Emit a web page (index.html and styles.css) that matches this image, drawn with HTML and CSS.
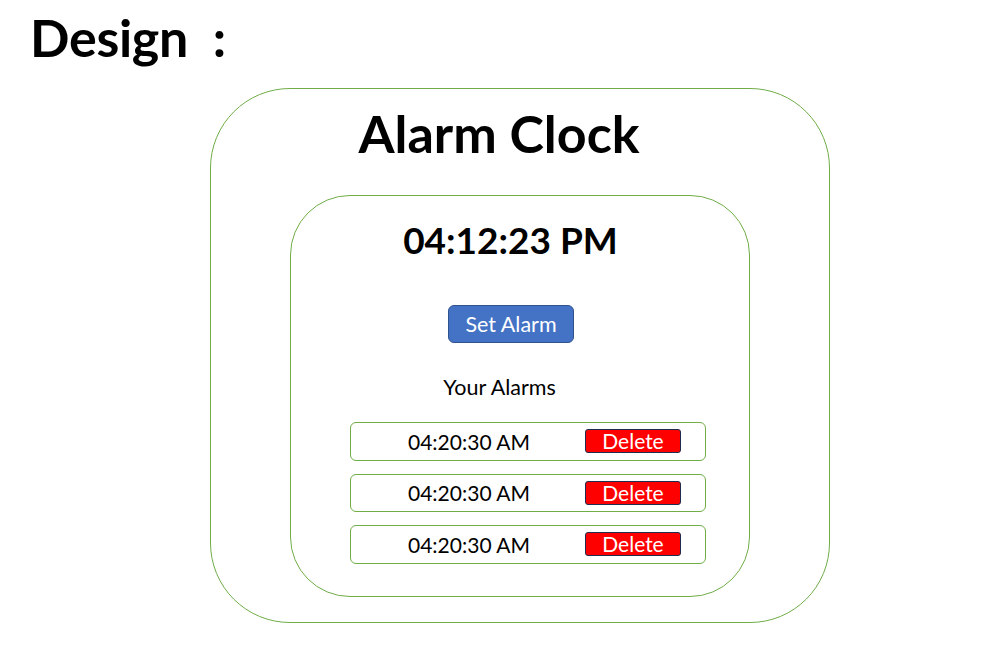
FILE: index.html
```html
<!DOCTYPE html>
<html lang="en">
<head>
<meta charset="utf-8">
<title>Alarm Clock Design</title>
<link rel="stylesheet" href="styles.css">
</head>
<body>
<h1 class="page-title">Design  :</h1>
<main class="clock-card">
  <h2 class="clock-title">Alarm Clock</h2>
  <section class="clock-panel">
    <div class="current-time">04:12:23 PM</div>
    <button class="set-alarm">Set Alarm</button>
    <div class="alarms-label">Your Alarms</div>
    <ul class="alarm-list">
      <li class="alarm-row"><span class="alarm-time">04:20:30 AM</span><button class="delete-btn">Delete</button></li>
      <li class="alarm-row"><span class="alarm-time">04:20:30 AM</span><button class="delete-btn">Delete</button></li>
      <li class="alarm-row"><span class="alarm-time">04:20:30 AM</span><button class="delete-btn">Delete</button></li>
    </ul>
  </section>
</main>
</body>
</html>
```
FILE: styles.css
```css
* { box-sizing: border-box; }
html, body { margin: 0; padding: 0; background: #ffffff; }
body {
  font-family: "Lato", "Open Sans", sans-serif;
  color: #000;
  width: 995px;
  height: 662px;
  overflow: hidden;
}
.page-title {
  margin: 0;
  padding: 9px 0 0 30px;
  font-size: 52px;
  line-height: 56px;
  font-weight: 700;
  white-space: pre;
  letter-spacing: -0.3px;
}
.clock-card {
  margin: 23px 0 0 210px;
  width: 620px;
  height: 535px;
  border: 1px solid #70ad47;
  border-radius: 80px;
  display: flex;
  flex-direction: column;
  align-items: center;
}
.clock-title {
  margin: 16px 0 0 -42px;
  font-size: 52px;
  line-height: 56px;
  font-weight: 700;
}
.clock-panel {
  margin-top: 34px;
  width: 460px;
  height: 402px;
  border: 1px solid #70ad47;
  border-radius: 60px;
  display: flex;
  flex-direction: column;
  align-items: center;
}
.current-time {
  margin: 24px 0 0 -19px;
  font-size: 37px;
  line-height: 40px;
  font-weight: 700;
}
.set-alarm {
  margin: 45px 0 0 -18px;
  width: 126px;
  height: 38px;
  background: #4472c4;
  border: 1px solid #2f528f;
  border-radius: 6px;
  color: #fff;
  font-family: inherit;
  font-size: 21.5px;
  padding: 0;
}
.alarms-label {
  margin: 31px 0 0 -41px;
  font-size: 21.5px;
  line-height: 26px;
}
.alarm-list {
  list-style: none;
  margin: 22px 0 0 16px;
  padding: 0;
  display: flex;
  flex-direction: column;
  gap: 13px;
}
.alarm-row {
  width: 356px;
  height: 38.5px;
  border: 1px solid #70ad47;
  border-radius: 6px;
  display: flex;
  align-items: center;
  padding-left: 57px;
}
.alarm-time {
  font-size: 21px;
  width: 177px;
}
.delete-btn {
  width: 96px;
  height: 24px;
  background: #ff0000;
  border: 1px solid #1f2d50;
  border-radius: 3px;
  color: #fff;
  font-family: inherit;
  font-size: 21px;
  line-height: 20px;
  padding: 0;
}
```
